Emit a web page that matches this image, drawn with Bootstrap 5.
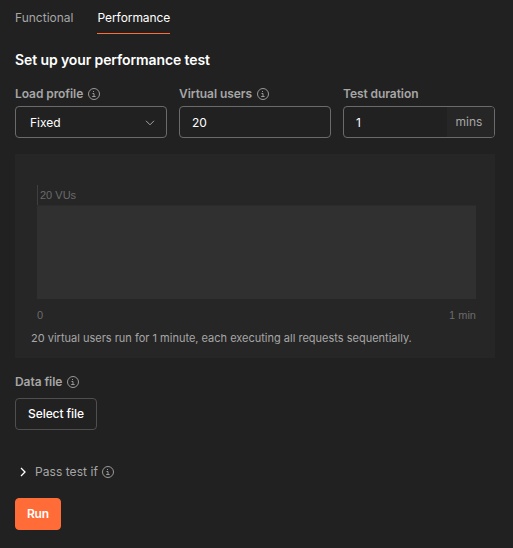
<!DOCTYPE html>
<html lang="en" data-bs-theme="dark">
<head>
<meta charset="utf-8">
<meta name="viewport" content="width=device-width, initial-scale=1">
<title>Performance test</title>
<link rel="stylesheet" href="https://cdn.jsdelivr.net/npm/bootstrap@5.3.0/dist/css/bootstrap.min.css">
<style>
body{background:#212121;color:#fff;font-family:Inter,"Liberation Sans",sans-serif;font-size:12px;line-height:16px;overflow:hidden}
.runner{padding:0 18px 0 15px}
.runner-tabs{gap:24px;height:34px;--bs-nav-link-padding-x:0;--bs-nav-link-padding-y:0}
.runner-tabs .nav-link{height:34px;padding-top:10px;font-size:12px;line-height:16px;color:#a6a6a6;border-bottom:1px solid transparent}
.runner-tabs .nav-link.active{color:#fff;border-bottom-color:#ff6c37;letter-spacing:-.06px}
.runner-title{font-size:14px;line-height:20px;font-weight:600;letter-spacing:-.11px;margin:16px 0 0}
.field-label{font-size:12px;line-height:16px;font-weight:600;color:#a6a6a6;letter-spacing:-.07px;gap:5px;margin:0}
.fields{display:grid;grid-template-columns:repeat(3,152px);gap:12px;margin-top:16px}
.field-box{height:32px;margin-top:4px;border:1px solid #6b6b6b;border-radius:4px;background:#212121;overflow:hidden}
.field-box .form-control{font-size:12px;line-height:16px;padding:0 12px;color:#fff;background:transparent;border:0;box-shadow:none;min-width:0;height:30px}
.field-box .unit{width:47px;background:#262626;color:#a6a6a6;padding-right:3px}
.select-face{padding:2px 11px 0 14px}
.load-panel{height:204px;margin-top:16px;padding:31px 19px 0 22px;background:#262626;color:#6b6b6b;font-size:11px}
.axis-top,.axis-bottom{font-family:"Liberation Sans",Arial,sans-serif}
.axis-top{height:20px;border-left:1px solid #3f3f3f;padding:2px 0 0 2px}
.load-area{height:94px;background:#303030;border-top:1px solid #2b2b2b}
.axis-bottom{margin-top:8px}
.load-note{color:#a6a6a6;margin:7px 0 0 -6px}
.btn-pick,.btn-go{height:32px;padding:0 12px;font-size:12px;line-height:16px;border-radius:4px}
.btn-pick{--bs-btn-color:#fff;--bs-btn-border-color:#4f4f4f;font-weight:500;width:82px;letter-spacing:-.08px}
.btn-go{--bs-btn-color:#fff;--bs-btn-bg:#ff6c37;--bs-btn-border-color:#ff6c37;font-weight:600;width:46px;padding:0;margin-top:18px;letter-spacing:-.1px}
.pass-row{margin-top:34px;height:16px;color:#a6a6a6}
.pass-row span{letter-spacing:.06px}
svg{display:block;flex:none}
</style>
<script src="https://cdn.jsdelivr.net/npm/bootstrap@5.3.0/dist/js/bootstrap.bundle.min.js"></script>
</head>
<body>
<svg class="d-none"><symbol id="info" viewBox="0 0 12 12"><circle cx="6" cy="6" r="5.5" fill="none" stroke="#a6a6a6" stroke-width=".9"/><path d="M5.5 3v1M4.5 5.5h1.5v3M4.2 8.5h3.4" fill="none" stroke="#a6a6a6" stroke-width=".9"/></symbol></svg>
<main class="runner">
  <nav class="nav runner-tabs"><a class="nav-link" href="#">Functional</a><a class="nav-link active" href="#">Performance</a></nav>
  <h1 class="runner-title">Set up your performance test</h1>
  <form>
    <div class="fields">
      <div><label class="field-label d-flex align-items-center"><span>Load profile</span><svg width="12" height="12"><use href="#info"/></svg></label>
        <div class="field-box select-face d-flex align-items-center justify-content-between"><span>Fixed</span><svg width="10" height="6" viewBox="0 0 10 6"><path d="M1 .8l4 4 4-4" fill="none" stroke="#a6a6a6"/></svg></div></div>
      <div><label class="field-label d-flex align-items-center" for="vus"><span>Virtual users</span><svg width="12" height="12"><use href="#info"/></svg></label>
        <div class="field-box"><input id="vus" class="form-control" value="20"></div></div>
      <div><label class="field-label d-flex align-items-center" for="dur">Test duration</label>
        <div class="field-box d-flex"><input id="dur" class="form-control" value="1"><span class="unit d-flex flex-shrink-0 align-items-center justify-content-center">mins</span></div></div>
    </div>
    <section class="load-panel">
      <div class="axis-top">20 VUs</div>
      <div class="load-area"></div>
      <div class="axis-bottom d-flex justify-content-between"><span>0</span><span>1 min</span></div>
      <p class="load-note">20 virtual users run for 1 minute, each executing all requests sequentially.</p>
    </section>
    <div class="field-label d-flex align-items-center mt-3"><span>Data file</span><svg width="12" height="12"><use href="#info"/></svg></div>
    <button type="button" class="btn btn-pick d-block mt-2">Select file</button>
    <div class="pass-row d-flex align-items-center"><svg class="ms-1 me-2" width="8" height="10" viewBox="0 0 8 10"><path d="M2 1l4 4-4 4" fill="none" stroke="#fff" stroke-width="1.3"/></svg><span class="me-1">Pass test if</span><svg width="12" height="12"><use href="#info"/></svg></div>
    <button type="button" class="btn btn-go d-block">Run</button>
  </form>
</main>
</body>
</html>
